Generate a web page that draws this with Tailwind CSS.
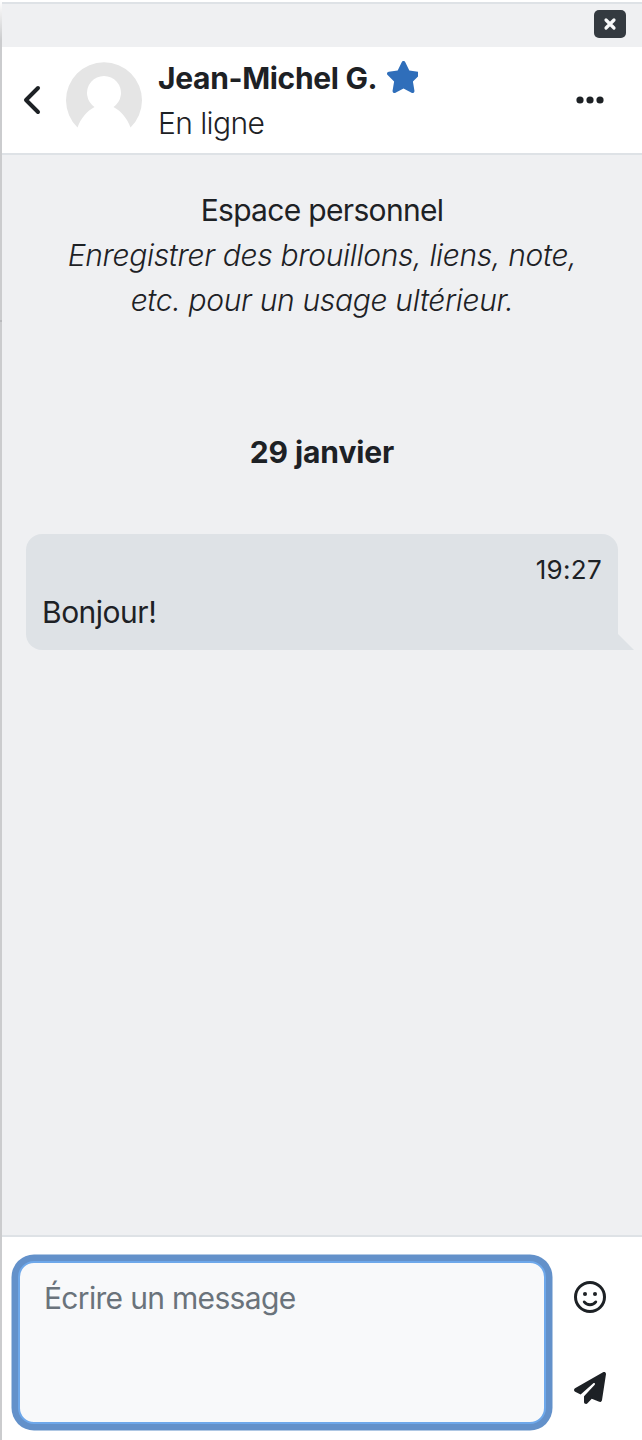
<!doctype html>
<html lang="fr">
  <head>
    <meta charset="UTF-8" />
    <meta name="viewport" content="width=device-width, initial-scale=1.0" />
    <title>Messages</title>
    <script src="https://cdn.jsdelivr.net/npm/@tailwindcss/browser@4"></script>
  </head>
  <body class="bg-white font-[Inter,sans-serif] text-[30px] leading-[45px] text-[#1d2125]">
    <div class="flex h-[1440px] w-[642px] overflow-hidden">
      <div class="flex w-0.5 shrink-0 flex-col bg-linear-to-b from-white to-[#cbccce] to-[40px]">
        <span class="mt-[320px] h-0.5 bg-[#b9babd]"></span>
      </div>
      <main class="flex min-w-0 flex-1 flex-col pt-0.5">
        <div class="flex h-[45px] shrink-0 items-start justify-end border-t-2 border-[#dee2e6] bg-[#eff0f2] pt-1.5 pr-4">
          <button type="button" aria-label="Fermer" class="flex h-7 w-8 items-center justify-center rounded-[5px] bg-[#343a40]">
            <svg class="size-4" viewBox="0 0 16 16" fill="none" stroke="#f8f9fa" stroke-width="3.2" stroke-linecap="round"><path d="M4 4l8 8M12 4l-8 8" /></svg>
          </button>
        </div>
        <header class="flex h-[108px] shrink-0 border-b-2 border-[#dee2e6] bg-white">
          <a href="#" aria-label="Retour" class="ml-5 flex h-[106px] w-6 items-center">
            <svg class="h-8 w-6" viewBox="0 0 24 32" fill="none" stroke="currentColor" stroke-width="4" stroke-linecap="round" stroke-linejoin="round"><path d="M16 4L4 16l12 12" /></svg>
          </a>
          <svg class="mt-[15px] ml-5 size-[76px] shrink-0" viewBox="0 0 76 76">
            <path d="M11.5 65.5A38 38 0 1 1 64.5 65.5C61 56 55 49 47.5 45A17 17 0 1 0 28.5 45C21 49 15 56 11.5 65.5z" fill="#e5e5e5" />
          </svg>
          <div class="ml-4 flex-1 pt-[9px]">
            <div class="flex items-center">
              <strong class="font-bold tracking-[-0.33px]">Jean-Michel G.</strong>
              <svg class="mb-1 ml-[9.5px] h-8 w-[31px]" viewBox="24 0 496 512" fill="#2f6eba"><path d="M316.9 18C311.6 7 300.4 0 288.1 0s-23.4 7-28.8 18L195 150.3 51.4 171.5c-12 1.8-22 10.2-25.7 21.7s-.7 24.2 7.9 32.7L137.8 329 113.2 474.7c-2 12 3 24.2 12.9 31.3s23 8 33.8 2.3l128.3-68.5 128.3 68.5c10.8 5.7 23.9 4.9 33.8-2.3s14.9-19.3 12.9-31.3L438.5 329 542.7 225.9c8.6-8.5 11.7-21.2 7.9-32.7s-13.7-19.9-25.7-21.7L381.2 150.3 316.9 18z" /></svg>
            </div>
            <p class="font-light tracking-[-0.6px]">En ligne</p>
          </div>
          <button type="button" aria-label="Options" class="mr-9 flex h-[106px] items-center">
            <svg class="h-8 w-8" viewBox="0 0 32 32" fill="currentColor"><circle cx="6" cy="16" r="3.6" /><circle cx="16" cy="16" r="3.6" /><circle cx="26" cy="16" r="3.6" /></svg>
          </button>
        </header>
        <section class="flex-1 bg-[#eff0f2] px-6 pt-[33px]">
          <div class="text-center">
            <p class="tracking-[-0.68px]">Espace personnel</p>
            <p class="font-light tracking-[-0.32px] italic">Enregistrer des brouillons, liens, note,<br />etc. pour un usage ultérieur.</p>
          </div>
          <h2 class="mt-[107px] text-center font-bold tracking-[-0.1px]">29 janvier</h2>
          <div class="relative mt-[59px] h-[116px] rounded-2xl rounded-br-none bg-[#dee2e6] px-4 pt-[14px]">
            <div class="text-right text-[26px] leading-[43px] tracking-[0.3px]">19:27</div>
            <p class="-mt-px tracking-[-0.5px]">Bonjour!</p>
            <svg class="absolute right-[-16px] bottom-0 size-4" viewBox="0 0 16 16"><path d="M0 0l16 16H0z" fill="#dee2e6" /></svg>
          </div>
        </section>
        <footer class="flex h-[205px] shrink-0 border-t-2 border-[#dee2e6] bg-white pt-6 pl-4">
          <textarea placeholder="Écrire un message" class="h-[163px] w-[528px] resize-none rounded-2xl border-2 border-[#6ea8ea] bg-[#f8f9fa] px-6 pt-[13px] tracking-[-0.68px] shadow-[0_0_0_6.5px_#6391ca] outline-none placeholder:text-[#6a737b]"></textarea>
          <div class="ml-7 flex flex-col gap-[59px] pt-5">
            <button type="button" aria-label="Émoticônes">
              <svg class="size-8" viewBox="0 0 32 32" fill="none" stroke="currentColor" stroke-width="3" stroke-linecap="round"><circle cx="16" cy="16" r="14.5" /><path d="M10.2 20.9c3 3.8 8.600 3.800 11.600 0" stroke-width="2.8" /><g fill="currentColor" stroke="none"><circle cx="11" cy="13" r="2.05" /><circle cx="21" cy="13" r="2.05" /></g></svg>
            </button>
            <button type="button" aria-label="Envoyer">
              <svg class="size-8" viewBox="0 0 512 512" fill="currentColor"><path d="M498.1 5.6c10.1 7 15.4 19.1 13.5 31.2l-64 416c-1.5 9.7-7.4 18.2-16 23s-18.9 5.4-28 1.6L284 427.7l-68.5 74.1c-8.9 9.7-22.9 12.9-35.2 8.1S160 493.2 160 480V396.4c0-4 1.5-7.8 4.2-10.7L331.8 202.8c5.8-6.3 5.6-16-.4-22s-15.7-6.4-22-.7L106 360.8 17.7 316.6C7.1 311.3 .3 300.7 0 288.9s5.9-22.8 16.1-28.7l448-256c10.7-6.1 23.9-5.5 34 1.4z" /></svg>
            </button>
          </div>
        </footer>
      </main>
    </div>
  </body>
</html>
